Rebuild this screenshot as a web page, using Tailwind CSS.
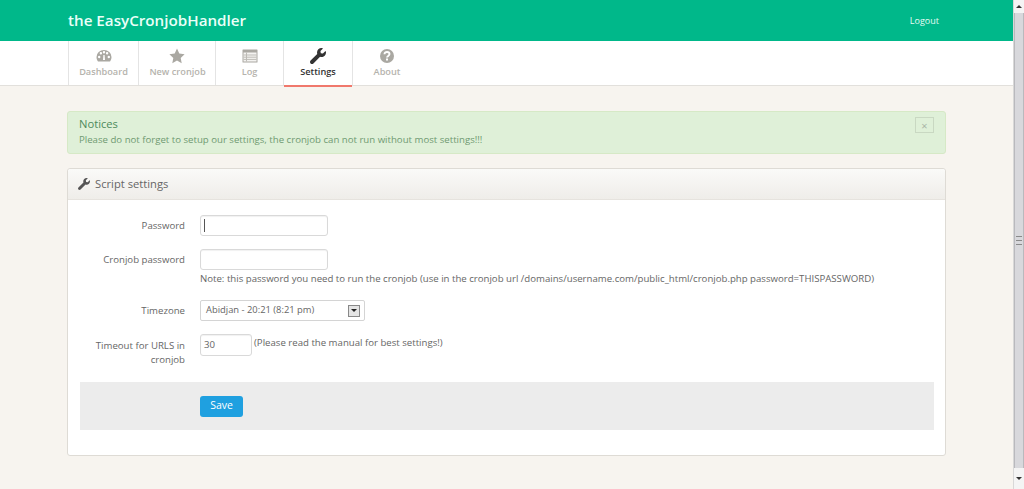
<!DOCTYPE html>
<html lang="en">
<head>
    <meta charset="UTF-8">
    <title>the EasyCronjobHandler</title>
    <script src="https://cdn.jsdelivr.net/npm/@tailwindcss/browser@4"></script>
</head>
<body class="h-[489px] overflow-hidden bg-[#f7f4ef] font-['Open_Sans',sans-serif] text-[9.64px] text-[#666]">
<div class="flex h-[489px]">
    <div class="min-w-0 flex-1">
        <!-- top bar -->
        <header class="flex h-[41px] items-center justify-between bg-[#00b88a] pl-[68px] pr-[74px]">
            <h1 class="text-[15.2px] font-semibold text-[#eafff8]">the EasyCronjobHandler</h1>
            <a class="text-[9px] text-[#e6fbf4]">Logout</a>
        </header>

        <!-- tabs -->
        <nav class="flex h-[45px] border-b border-[#e2e0dc] bg-white pl-[68px]">
            <a class="flex w-[71px] flex-col items-center border-x border-[#e4e4e4] pt-[7px] text-[#b5b3ad]">
                <svg class="h-[16px] w-[16px]" viewBox="0 0 16 16" fill="#aaa8a2"><path d="M8 2A7.500 7 0 0 0 .5 9c0 1.600.5 3 1.300 4.200.2.2.4.3.7.3h11c.3 0 .5-.1.7-.3.8-1.200 1.300-2.600 1.300-4.200A7.500 7 0 0 0 8 2zM3.200 10.200a1.200 1.200 0 1 1 0-2.400 1.200 1.200 0 0 1 0 2.400zm1.700-3.700a1.200 1.200 0 1 1 0-2.400 1.200 1.200 0 0 1 0 2.400zM8 5.400a1.200 1.200 0 1 1 0-2.400 1.200 1.200 0 0 1 0 2.400zm1 6.700H7l.4-5h1.200l.4 5zm2.100-5.600a1.200 1.200 0 1 1 0-2.400 1.200 1.200 0 0 1 0 2.400zm1.700 3.700a1.200 1.200 0 1 1 0-2.400 1.200 1.200 0 0 1 0 2.400z"/></svg>
                <span class="mt-[1px] text-[9.2px] font-semibold">Dashboard</span>
            </a>
            <a class="flex w-[77px] flex-col items-center border-r border-[#e4e4e4] pt-[7px] text-[#b5b3ad]">
                <svg class="h-[16px] w-[16px]" viewBox="0 0 16 16" fill="#aaa8a2"><path d="M8 .6l2.300 4.900 5.300.7-3.900 3.700 1 5.300L8 12.600l-4.700 2.600 1-5.300L.4 6.200l5.300-.7z"/></svg>
                <span class="mt-[1px] pl-[1px] text-[9.2px] font-semibold">New cronjob</span>
            </a>
            <a class="flex w-[68px] flex-col items-center border-r border-[#e4e4e4] pt-[7px] text-[#b5b3ad]">
                <svg class="h-[16px] w-[16px]" viewBox="0 0 16 16"><path fill="#aaa8a2" d="M1 1.500h14a.5.5 0 0 1 .5.5v12a.5.5 0 0 1-.5.5H1a.5.5 0 0 1-.5-.5V2a.5.5 0 0 1 .5-.5z"/><path fill="#f4f3f1" d="M1.500 4.500h13v9h-13z"/><path stroke="#bdbbb6" d="M1.500 7h13M1.500 9.200h13M1.500 11.400h13M4.500 4.500v9"/></svg>
                <span class="mt-[1px] text-[9.2px] font-semibold">Log</span>
            </a>
            <a class="flex h-[46px] w-[68px] flex-col items-center border-b-2 border-[#f0786c] pt-[7px] text-[#333]">
                <svg class="h-[16px] w-[16px]" viewBox="0 0 512 512" fill="#333"><path d="M507.730 109.100c-2.240-9.030-13.540-12.090-20.120-5.510l-74.360 74.360-67.880-11.310-11.310-67.880 74.360-74.360c6.620-6.620 3.430-17.900-5.660-20.160-47.380-11.740-99.550.91-136.580 37.930-39.640 39.640-50.550 97.100-34.050 147.200L18.740 402.760c-24.990 24.990-24.990 65.510 0 90.500 24.990 24.990 65.510 24.990 90.500 0l213.210-213.210c50.120 16.710 107.470 5.680 147.370-34.220 37.070-37.070 49.700-89.320 37.910-136.730z"/></svg>
                <span class="mt-[1px] text-[9.2px] font-semibold">Settings</span>
            </a>
            <a class="flex w-[69px] flex-col items-center border-l border-[#e4e4e4] pt-[7px] text-[#b5b3ad]">
                <svg class="h-[16px] w-[16px]" viewBox="0 0 16 16"><circle cx="8" cy="8" r="7" fill="#aaa8a2"/><path fill="none" stroke="#fff" stroke-width="1.900" d="M5.500 6.200c0-1.400 1.100-2.200 2.500-2.200s2.500.8 2.500 2.100c0 1.800-2.500 1.800-2.500 3.500"/><path fill="#fff" d="M7 10.600h2v2H7z"/></svg>
                <span class="mt-[1px] text-[9.2px] font-semibold">About</span>
            </a>
        </nav>

        <main class="ml-[67px] w-[879px] pt-[25px]">
            <!-- notice -->
            <section class="relative h-[43px] rounded-[3px] border border-[#d6e9c6] bg-[#dff0d8] pl-[11px] pt-[5px] leading-[14px] text-[#6f9a72]">
                <h2 class="text-[11.2px] font-medium text-[#4e8a5c]">Notices</h2>
                <p class="mt-[2px]">Please do not forget to setup our settings, the cronjob can not run without most settings!!!</p>
                <button class="absolute right-[11px] top-[5px] flex h-[16px] w-[19px] items-center justify-center border border-[#c9d8c2] text-[11px] leading-none text-[#a9b5a6]">×</button>
            </section>

            <!-- settings panel -->
            <section class="mt-[14px] h-[288px] rounded-[3px] border border-[#dedbd5] bg-white">
                <div class="flex h-[31px] items-center gap-[5px] rounded-t-[3px] border-b border-[#e6e3de] bg-gradient-to-b from-[#fafaf8] to-[#efede9] pl-[10px]">
                    <svg class="h-[12px] w-[12px]" viewBox="0 0 512 512" fill="#555"><path d="M507.730 109.100c-2.240-9.030-13.540-12.090-20.120-5.510l-74.360 74.360-67.880-11.310-11.310-67.880 74.360-74.360c6.620-6.620 3.430-17.900-5.660-20.160-47.380-11.740-99.550.91-136.580 37.930-39.640 39.640-50.550 97.100-34.050 147.200L18.740 402.760c-24.990 24.990-24.990 65.510 0 90.500 24.990 24.990 65.510 24.990 90.500 0l213.210-213.210c50.120 16.710 107.470 5.680 147.370-34.220 37.070-37.070 49.700-89.320 37.910-136.730z"/></svg>
                    <span class="pt-[1px] text-[11.200px] font-medium text-[#666]">Script settings</span>
                </div>

                <div class="pl-[12px] pr-[11px] pt-[15px]">
                    <div class="grid grid-cols-[105px_1fr] gap-x-[15px]">
                        <label class="pt-[4px] text-right">Password</label>
                        <div class="h-[34px]">
                            <div class="flex h-[21px] w-[128px] items-center rounded-[3px] border border-[#d9d9d9] bg-white pl-[3px] shadow-[inset_0_1px_1px_rgba(0,0,0,0.06)]"><span class="h-[13px] w-px bg-[#555]"></span></div>
                        </div>

                        <label class="pt-[4px] text-right">Cronjob password</label>
                        <div class="h-[51px]">
                            <div class="h-[21px] w-[128px] rounded-[3px] border border-[#d9d9d9] bg-white shadow-[inset_0_1px_1px_rgba(0,0,0,0.06)]"></div>
                            <p class="mt-[2px] whitespace-nowrap">Note: this password you need to run the cronjob (use in the cronjob url /domains/username.com/public_html/cronjob.php password=THISPASSWORD)</p>
                        </div>

                        <label class="pt-[4px] text-right">Timezone</label>
                        <div class="h-[34px]">
                            <div class="flex h-[21px] w-[165px] items-center justify-between rounded-[2px] border border-[#d4d4d4] bg-white pl-[5px] pr-[4px] text-[9.4px]">
                                <span>Abidjan - 20:21 (8:21 pm)</span>
                                <span class="flex h-[12px] w-[12px] items-center justify-center border border-[#888] bg-[#e4e4e4]"><span class="h-0 w-0 border-x-[3px] border-t-[3px] border-x-transparent border-t-[#222]"></span></span>
                            </div>
                        </div>

                        <label class="pt-[5px] text-right leading-[14px]">Timeout for URLS in cronjob</label>
                        <div class="flex h-[48px] items-start gap-[2px]">
                            <div class="flex h-[22px] w-[52px] items-center rounded-[3px] border border-[#d9d9d9] bg-white pl-[3px] shadow-[inset_0_1px_1px_rgba(0,0,0,0.06)]">30</div>
                            <span class="pt-[2px]">(Please read the manual for best settings!)</span>
                        </div>
                    </div>

                    <!-- form actions -->
                    <div class="flex h-[48px] items-center bg-[#ececec] pl-[120px]">
                        <button class="h-[21px] w-[43px] rounded-[3px] bg-[#1fa0e0] text-[10.500px] text-white">Save</button>
                    </div>
                </div>
            </section>
        </main>
    </div>

    <!-- browser scrollbar -->
    <aside class="flex w-[11px] flex-col border-l border-[#d8d8d8] bg-[#f4f4f4]">
        <div class="flex h-[13px] items-center justify-center"><span class="h-0 w-0 border-x-[3px] border-b-[3px] border-x-transparent border-b-[#333]"></span></div>
        <div class="flex flex-1 items-center justify-center border-x border-[#b9b9bd] bg-[#d8d8dc]"><span class="flex h-[9px] w-[6px] flex-col justify-between"><span class="h-px bg-[#8a8a8a]"></span><span class="h-px bg-[#8a8a8a]"></span><span class="h-px bg-[#8a8a8a]"></span></span></div>
        <div class="flex h-[21px] items-center justify-center"><span class="h-0 w-0 border-x-[3px] border-t-[3px] border-x-transparent border-t-[#333]"></span></div>
    </aside>
</div>
</body>
</html>
